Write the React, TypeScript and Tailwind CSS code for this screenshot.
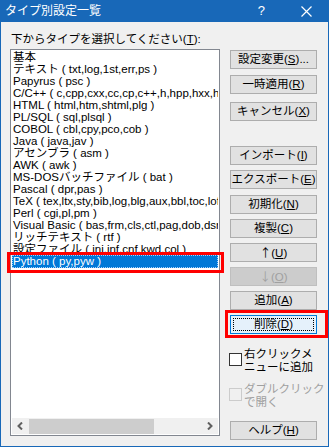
import type { ReactNode } from "react";

const FONT = { fontFamily: '"Liberation Sans", "Noto Sans CJK JP", sans-serif' };
const CJK = { fontFamily: '"Noto Sans CJK JP", sans-serif' };

const items = [
  "基本",
  "テキスト ( txt,log,1st,err,ps )",
  "Papyrus ( psc )",
  "C/C++ ( c,cpp,cxx,cc,cp,c++,h,hpp,hxx,hh,hp,inl )",
  "HTML ( html,htm,shtml,plg )",
  "PL/SQL ( sql,plsql )",
  "COBOL ( cbl,cpy,pco,cob )",
  "Java ( java,jav )",
  "アセンブラ ( asm )",
  "AWK ( awk )",
  "MS-DOSバッチファイル ( bat )",
  "Pascal ( dpr,pas )",
  "TeX ( tex,ltx,sty,bib,log,blg,aux,bbl,toc,lof,lot,idx,ind,glo )",
  "Perl ( cgi,pl,pm )",
  "Visual Basic ( bas,frm,cls,ctl,pag,dob,dsr,vb )",
  "リッチテキスト ( rtf )",
  "設定ファイル ( ini,inf,cnf,kwd,col )",
];

function Btn({
  label,
  mnemonic,
  suffix = "",
  className = "",
  disabled = false,
  focused = false,
  arrow = false,
}: {
  label: string;
  mnemonic: string;
  suffix?: string;
  className?: string;
  disabled?: boolean;
  focused?: boolean;
  arrow?: boolean;
}) {
  const text = (
    <>
      <span style={arrow ? CJK : undefined}>{label}</span>(<u>{mnemonic}</u>){suffix}
    </>
  );
  return (
    <div className={`relative ${className}`}>
      <div
        className={`flex h-[19px] w-[87px] items-center justify-center whitespace-nowrap text-[11.5px] leading-[13px] ${
          disabled
            ? "border border-[#bfbfbf] bg-[#cccccc] text-[#a0a0a0]"
            : focused
            ? "border border-[#0078d7] bg-[#e5f1fb] text-black"
            : "border border-[#adadad] bg-[#e1e1e1] text-black"
        }`}
      >
        {focused ? (
          <span className="flex h-[13px] w-[81px] items-center justify-center border border-dotted border-black">
            {text}
          </span>
        ) : (
          <span>{text}</span>
        )}
      </div>
      {focused && (
        <div className="pointer-events-none absolute -top-[5px] -left-[5px] -right-[3px] -bottom-[4px] border-[3px] border-[#ff0000]" />
      )}
    </div>
  );
}

function Check({ children, disabled = false, className = "" }: { children: ReactNode; disabled?: boolean; className?: string }) {
  return (
    <div className={`-ml-[1px] flex items-start gap-[2px] ${className}`}>
      <div
        className={`mt-[5px] h-[13px] w-[13px] shrink-0 border ${
          disabled ? "border-[#cccccc] bg-[#f0f0f0]" : "border-[#333333] bg-white"
        }`}
      />
      <div
        className={`whitespace-nowrap text-[11.5px] leading-[13px] ${disabled ? "text-[#a0a0a0]" : "text-black"}`}
      >
        {children}
      </div>
    </div>
  );
}

function Chevron({ dir }: { dir: "left" | "right" }) {
  return (
    <svg width="7" height="8" viewBox="0 0 7 8">
      <path
        d={dir === "left" ? "M5 0.5 L1.5 4 L5 7.5" : "M2 0.5 L5.5 4 L2 7.5"}
        fill="none"
        stroke="#606060"
        strokeWidth="2"
      />
    </svg>
  );
}

export default function App() {
  return (
    <div style={FONT} className="flex h-[447px] w-[329px] flex-col border-x border-b border-[#1868b8] bg-[#f0f0f0]">
      {/* title bar */}
      <div className="flex h-[22px] shrink-0 items-center bg-[#1868b8] text-white">
        <span className="ml-[4px] text-[12px] leading-[14px]">タイプ別設定一覧</span>
        <span className="ml-auto mr-[36px] text-[13px] leading-[14px]">?</span>
        <svg width="11" height="11" viewBox="0 0 11 11" className="mr-[16px]">
          <path d="M0.5 0.5 L10.5 10.5 M10.5 0.5 L0.5 10.5" stroke="white" strokeWidth="1.2" />
        </svg>
      </div>

      <div className="flex flex-1 pl-[9px]">
        {/* left: list */}
        <div className="flex w-[210px] flex-col">
          <div className="mt-[11px] h-[13px] pl-[1px] text-[11.5px] leading-[13px] text-black whitespace-nowrap">
            下からタイプを選択してください(<u>T</u>):
          </div>
          <div className="mt-[3px] flex h-[387px] flex-col border border-[#828790] bg-white p-[1px]">
            <div className="flex-1">
              {items.map((t) => (
                <div
                  key={t}
                  className="h-[12px] overflow-hidden whitespace-nowrap pl-[1px] text-[11.5px] leading-[12px] text-black"
                >
                  {t}
                </div>
              ))}
              <div className="relative">
                <div className="h-[13px] overflow-hidden whitespace-nowrap border border-dotted border-[#9fd0ff] bg-[#0078d7] text-[11.5px] leading-[11px] text-white">
                  Python ( py,pyw )
                </div>
                <div className="pointer-events-none absolute -top-[3px] -left-[5px] -right-[6px] -bottom-[5px] border-[3px] border-[#ff0000]" />
              </div>
            </div>
            {/* horizontal scrollbar */}
            <div className="flex h-[16px] shrink-0 items-center bg-[#f0f0f0]">
              <div className="flex h-full w-[17px] items-center justify-center">
                <Chevron dir="left" />
              </div>
              <div className="h-[15px] w-[125px] bg-[#cdcdcd]" />
              <div className="flex-1" />
              <div className="flex h-full w-[17px] items-center justify-center">
                <Chevron dir="right" />
              </div>
            </div>
          </div>
        </div>

        {/* right: buttons */}
        <div className="ml-[10px] flex flex-col pt-[28px]">
          <Btn label="設定変更" mnemonic="S" suffix="..." />
          <Btn label="一時適用" mnemonic="R" className="mt-[6px]" />
          <Btn label="キャンセル" mnemonic="X" className="mt-[8px]" />
          <Btn label="インポート" mnemonic="I" className="mt-[25px]" />
          <Btn label="エクスポート" mnemonic="E" className="mt-[5px]" />
          <Btn label="初期化" mnemonic="N" className="mt-[6px]" />
          <Btn label="複製" mnemonic="C" className="mt-[5px]" />
          <Btn label="↑" mnemonic="U" className="mt-[5px]" arrow />
          <Btn label="↓" mnemonic="O" className="mt-[5px]" disabled arrow />
          <Btn label="追加" mnemonic="A" className="mt-[5px]" />
          <Btn label="削除" mnemonic="D" className="mt-[5px]" focused />
          <Check className="mt-[14px]">
            右クリックメ
            <br />
            ニューに追加
          </Check>
          <Check className="mt-[9px]" disabled>
            ダブルクリック
            <br />
            で開く
          </Check>
          <Btn label="ヘルプ" mnemonic="H" className="mt-[12px]" />
        </div>
      </div>
    </div>
  );
}
